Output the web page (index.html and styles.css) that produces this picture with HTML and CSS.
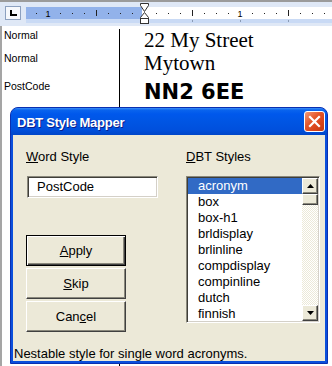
FILE: index.html
```html
<!DOCTYPE html>
<html>
<head>
<title>DBT Style Mapper</title>
<link rel="stylesheet" href="styles.css">
</head>
<body>

<div class="window">
  <div class="ruler">
    <div class="tab-select">
      <svg width="7" height="6" viewBox="0 0 7 6"><path d="M0 0h2v4h5v2H0z" fill="#000"/></svg>
    </div>
    <svg class="ruler-scale" width="306" height="24" viewBox="0 0 306 24">
      <rect x="0" y="5" width="116" height="12" fill="#92b2ea"/>
      <rect x="116" y="5" width="190" height="12" fill="#fff"/>
      <rect x="0" y="17" width="306" height="4" fill="#c9daf5"/>
      <g fill="#8a9bb5">
        <rect x="166" y="18" width="1" height="2"/>
        <rect x="214" y="18" width="1" height="2"/>
        <rect x="262" y="18" width="1" height="2"/>
      </g>
      <g fill="#222">
        <rect x="10" y="11" width="1" height="1"/>
        <rect x="34" y="11" width="1" height="1"/>
        <rect x="46" y="11" width="1" height="1"/>
        <rect x="58" y="11" width="1" height="1"/>
        <rect x="82" y="11" width="1" height="1"/>
        <rect x="94" y="11" width="1" height="1"/>
        <rect x="106" y="11" width="1" height="1"/>
        <rect x="130" y="11" width="1" height="1"/>
        <rect x="142" y="11" width="1" height="1"/>
        <rect x="154" y="11" width="1" height="1"/>
        <rect x="178" y="11" width="1" height="1"/>
        <rect x="190" y="11" width="1" height="1"/>
        <rect x="202" y="11" width="1" height="1"/>
        <rect x="226" y="11" width="1" height="1"/>
        <rect x="238" y="11" width="1" height="1"/>
        <rect x="250" y="11" width="1" height="1"/>
        <rect x="274" y="11" width="1" height="1"/>
        <rect x="286" y="11" width="1" height="1"/>
        <rect x="298" y="11" width="1" height="1"/>
        <rect x="70" y="8" width="1" height="6"/>
        <rect x="166" y="8" width="1" height="6"/>
        <rect x="262" y="8" width="1" height="6"/>
      </g>
      <text class="ruler-num" x="22" y="14.5">1</text>
      <text class="ruler-num" x="214" y="14.5">1</text>
      <g fill="#fff" stroke="#333" stroke-width="1">
        <path d="M114.5 1.5H122.5V3.5L118.5 9.5L114.5 3.5Z"/>
        <path d="M118.5 10.5L122.5 15.5V16.5H114.5V15.5Z"/>
        <rect x="114.5" y="16.5" width="8" height="5"/>
      </g>
    </svg>
  </div>

  <div class="document">
    <div class="style-area">
      <div class="para">Normal</div>
      <div class="para">Normal</div>
      <div class="para para-post">PostCode</div>
    </div>
    <div class="page">
      <div class="para address">22 My Street</div>
      <div class="para address">Mytown</div>
      <div class="para para-post postcode">NN2 6EE</div>
    </div>
  </div>

  <div class="dialog">
    <div class="titlebar">
      <span class="title">DBT Style Mapper</span>
      <div class="close-btn">
        <svg width="19" height="19" viewBox="0 0 19 19">
          <path d="M5 5L14 14M14 5L5 14" stroke="#fff" stroke-width="2.2" stroke-linecap="square"/>
        </svg>
      </div>
    </div>
    <div class="dlg-body">
      <div class="dlg-columns">
        <div class="col-word">
          <div class="field-label"><u>W</u>ord Style</div>
          <div class="textbox">PostCode</div>
          <div class="buttons">
            <div class="btn btn-default"><u>A</u>pply</div>
            <div class="btn"><u>S</u>kip</div>
            <div class="btn">Can<u>c</u>el</div>
          </div>
        </div>
        <div class="col-dbt">
          <div class="field-label"><u>D</u>BT Styles</div>
          <div class="listbox">
            <ul class="list-items">
              <li class="selected">acronym</li>
              <li>box</li>
              <li>box-h1</li>
              <li>brldisplay</li>
              <li>brlinline</li>
              <li>compdisplay</li>
              <li>compinline</li>
              <li>dutch</li>
              <li>finnish</li>
            </ul>
            <div class="scrollbar">
              <div class="sb-btn">
                <svg width="7" height="4" viewBox="0 0 7 4"><path d="M3.5 0L7 4H0Z" fill="#000"/></svg>
              </div>
              <div class="sb-thumb"></div>
              <div class="sb-track"></div>
              <div class="sb-btn">
                <svg width="7" height="4" viewBox="0 0 7 4"><path d="M0 0H7L3.5 4Z" fill="#000"/></svg>
              </div>
            </div>
          </div>
        </div>
      </div>
      <div class="status">Nestable style for single word acronyms.</div>
    </div>
  </div>
</div>

</body>
</html>
```

FILE: styles.css
```css
* {
  box-sizing: border-box;
}

body {
  margin: 0;
  width: 332px;
  height: 366px;
  overflow: hidden;
  background: #fff;
  font-family: "Liberation Sans", Arial, sans-serif;
  font-size: 13px;
  color: #000;
}

.window {
  position: relative;
  width: 332px;
  height: 366px;
  display: flex;
  flex-direction: column;
}

/* ruler */
.ruler {
  display: flex;
  height: 26px;
  flex: none;
  border-top: 2px solid #9b9b9b;
  background: #dfe8f6;
}

.tab-select {
  width: 16px;
  height: 14px;
  margin: 4px 0 0 5px;
  border: 1px solid #8ca0bf;
  background: #f6f8fc;
  display: flex;
  align-items: center;
  justify-content: center;
}

.ruler-scale {
  margin-left: 5px;
  flex: none;
}

.ruler-num {
  font-family: "Liberation Sans", Arial, sans-serif;
  font-size: 9px;
  text-anchor: middle;
  fill: #000;
}

/* document with style area */
.document {
  flex: 1;
  display: flex;
  padding-top: 3px;
  border-left: 2px solid #a5a5a5;
}

.style-area {
  width: 118px;
  padding-left: 2px;
  border-right: 1px solid #000;
  font-size: 10.5px;
  line-height: 13px;
}

.para {
  height: 23px;
}

.para-post {
  height: 29px;
  padding-top: 5px;
}

.page {
  flex: 1;
  padding-left: 24px;
}

.address {
  font-family: "Liberation Serif", "Times New Roman", serif;
  font-size: 21px;
  line-height: 23px;
}

.postcode {
  font-family: "DejaVu Sans", sans-serif;
  font-weight: bold;
  font-size: 21px;
  line-height: 24px;
}

/* dialog window */
.dialog {
  position: absolute;
  left: 10px;
  top: 107px;
  width: 318px;
  height: 257px;
  display: flex;
  flex-direction: column;
  border: 1px solid #0a2fb0;
  border-radius: 8px 8px 0 0;
  background: #0b4fdc;
  overflow: hidden;
}

.titlebar {
  height: 27px;
  flex: none;
  display: flex;
  align-items: center;
  justify-content: space-between;
  padding: 0 2px 0 6px;
  background: linear-gradient(180deg, #3d8ff7 0, #0a64ee 2px, #0058ec 6px, #0055e3 50%, #0050dd 80%, #0046c8 100%);
}

.title {
  margin-top: 2px;
  color: #fff;
  font-weight: bold;
  font-size: 13px;
  letter-spacing: -0.25px;
  text-shadow: 1px 1px 0 #0a1e8c;
}

.close-btn {
  width: 21px;
  height: 21px;
  border: 1px solid #fff;
  border-radius: 3px;
  background: linear-gradient(135deg, #f39a78 0, #e5582c 40%, #d8441a 70%, #c13a12 100%);
  display: flex;
  align-items: center;
  justify-content: center;
}

.dlg-body {
  flex: 1;
  margin: 0 2px 2px;
  padding: 14px 0 0 1px;
  background: #ece9d8;
  display: flex;
  flex-direction: column;
}

.dlg-columns {
  display: flex;
  padding-left: 12px;
}

.col-word {
  width: 134px;
}

.col-dbt {
  margin-left: 26px;
}

.field-label {
  line-height: 16px;
  margin-bottom: 11px;
}

.textbox {
  width: 131px;
  height: 22px;
  margin-left: 1px;
  padding: 2px 0 0 9px;
  line-height: 16px;
  background: #fff;
  border: 1px solid;
  border-color: #8a887c #fff #fff #8a887c;
  box-shadow: inset 1px 1px #3f3e38, inset -1px -1px #d4d0c8;
}

.buttons {
  margin-top: 37px;
  width: 100px;
  display: flex;
  flex-direction: column;
  gap: 2px;
}

.btn {
  height: 31px;
  display: flex;
  align-items: center;
  justify-content: center;
  background: #ece9d8;
  border: 1px solid;
  border-color: #fff #404040 #404040 #fff;
  box-shadow: inset -1px -1px #8a887c;
}

.btn-default {
  border-color: #000;
  box-shadow: inset 1px 1px #fff, inset -1px -1px #404040, inset -2px -2px #8a887c;
}

.listbox {
  width: 134px;
  height: 147px;
  display: flex;
  background: #fff;
  border: 1px solid;
  border-color: #8a887c #fff #fff #8a887c;
  box-shadow: inset 1px 1px #3f3e38, inset -1px -1px #d4d0c8;
  padding: 1px;
}

.list-items {
  flex: 1;
  margin: 0;
  padding: 0;
  list-style: none;
  overflow: hidden;
}

.list-items li {
  height: 16px;
  line-height: 16px;
  padding-left: 10px;
}

.list-items li.selected {
  background: #316ac5;
  color: #fff;
}

.scrollbar {
  width: 16px;
  display: flex;
  flex-direction: column;
}

.sb-btn,
.sb-thumb {
  background: #ece9d8;
  border: 1px solid;
  border-color: #fff #404040 #404040 #fff;
  box-shadow: inset -1px -1px #8a887c;
}

.sb-btn {
  height: 16px;
  display: flex;
  align-items: center;
  justify-content: center;
}

.sb-thumb {
  height: 11px;
}

.sb-track {
  flex: 1;
  background: repeating-conic-gradient(#ece9d8 0 25%, #fff 0 50%) 0 0 / 2px 2px;
}

.status {
  margin-top: auto;
  line-height: 14px;
  white-space: nowrap;
}
```
